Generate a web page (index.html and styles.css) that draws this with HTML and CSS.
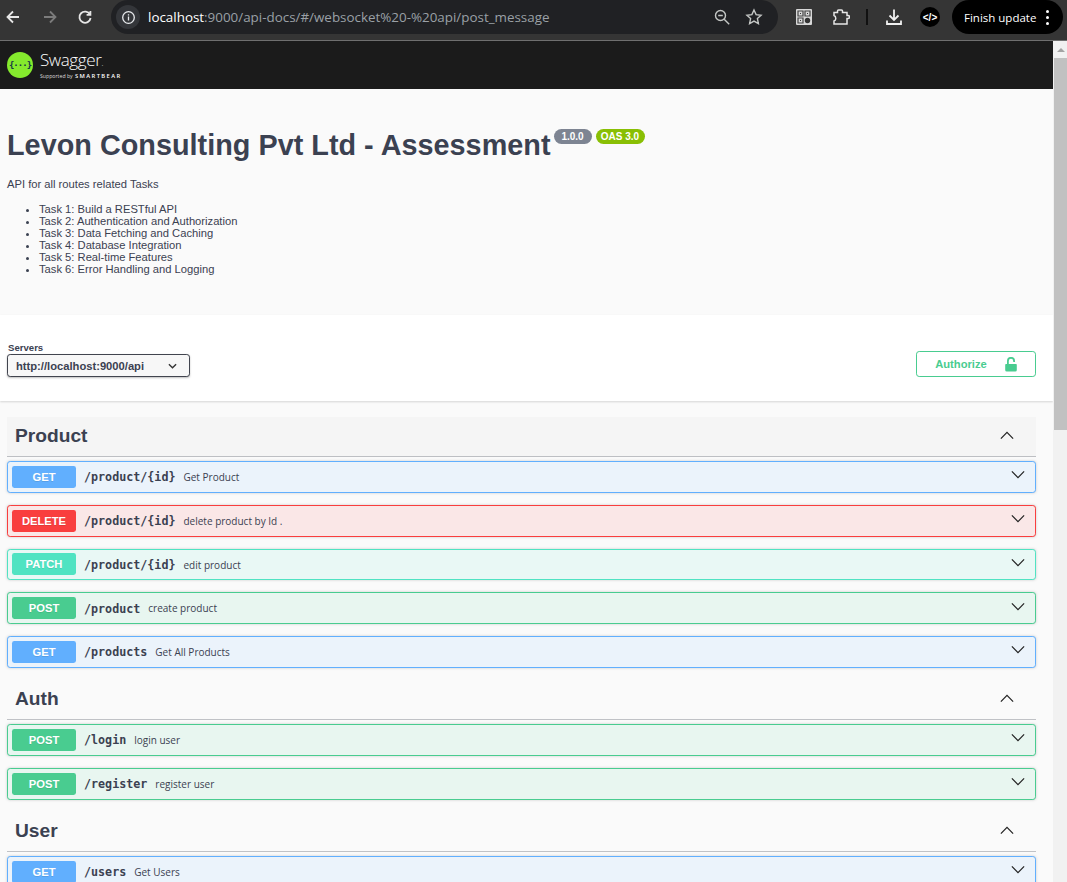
FILE: index.html
```html
<!DOCTYPE html>
<html lang="en">
<head>
<meta charset="utf-8">
<title>Swagger UI</title>
<link rel="stylesheet" href="styles.css">
</head>
<body>
<header class="browser">
  <div class="nav-btns">
    <svg class="nav-icon" viewBox="0 0 16 16"><path d="M14 8H2.500M8 2.500L2.500 8 8 13.500" /></svg>
    <svg class="nav-icon dim" viewBox="0 0 16 16"><path d="M3 8h11.500M9 2.500L14.500 8 9 13.500" /></svg>
    <svg class="nav-icon" viewBox="0 0 16 16"><path d="M13 5.500A5.600 5.600 0 1 0 13.600 9M13.400 2v3.800H9.600" /></svg>
  </div>
  <div class="omnibox">
    <span class="site-info"><svg class="info-icon" viewBox="0 0 16 16"><circle cx="8" cy="8" r="6.200"/><path d="M8 7v4.200M8 4.400v1.400"/></svg></span>
    <span class="url"><span class="host">localhost</span>:9000/api-docs/#/websocket%20-%20api/post_message</span>
    <span class="omni-actions">
      <svg class="omni-icon" viewBox="0 0 18 18"><circle cx="7.500" cy="7.500" r="5"/><path d="M5.200 7.500h4.600M11.200 11.200l5 5"/></svg>
      <svg class="omni-icon" viewBox="0 0 18 18"><path d="M9 2l2.100 4.600 5 .6-3.700 3.400 1 5L9 13.100l-4.400 2.500 1-5L1.900 7.200l5-.6z"/></svg>
    </span>
  </div>
  <div class="tools">
    <svg class="qr" viewBox="0 0 16 16"><rect width="16" height="16" rx="1" fill="#d8d8d8"/><path d="M2 2h5v5H2zM9 2h5v5H9zM2 9h5v5H2z" fill="none" stroke="#444" stroke-width="1.200"/><path d="M4 4h1v1H4zM11 4h1v1h-1zM4 11h1v1H4z" fill="#333"/><circle cx="11.500" cy="11.500" r="2.700" fill="#333"/></svg>
    <svg class="ext" viewBox="0 0 17 16"><path d="M1 3.500h3.500V2a1 1 0 0 1 1-1h3a1 1 0 0 1 1 1v1.500H14v3h1a1.500 1.500 0 0 1 0 3h-1V15H1v-3c1.200-.5 1.800-1.300 1.800-2.600S2.200 7 1 6.500z"/></svg>
    <span class="divider"></span>
    <svg class="dl" viewBox="0 0 16 16"><path d="M8 .5v10M3.500 6.500L8 11l4.500-4.500M1 11.500v3.500h14v-3.500"/></svg>
    <span class="dev-badge">&lt;/&gt;</span>
    <span class="update">Finish update<span class="kebab"><i></i><i></i><i></i></span></span>
  </div>
</header>
<div class="viewport">
  <main class="content">
    <div class="topbar">
      <div class="logo-mark">{···}</div>
      <div class="logo-text">
        <span class="logo-name">Swagger<small>.</small></span>
        <span class="logo-sub">Supported by <b>SMARTBEAR</b></span>
      </div>
    </div>
    <section class="info">
      <div class="title-row">
        <h1>Levon Consulting Pvt Ltd - Assessment</h1>
        <span class="badge version">1.0.0</span>
        <span class="badge oas">OAS 3.0</span>
      </div>
      <p class="desc">API for all routes related Tasks</p>
      <ul class="tasks">
        <li>Task 1: Build a RESTful API</li>
        <li>Task 2: Authentication and Authorization</li>
        <li>Task 3: Data Fetching and Caching</li>
        <li>Task 4: Database Integration</li>
        <li>Task 5: Real-time Features</li>
        <li>Task 6: Error Handling and Logging</li>
      </ul>
    </section>
    <section class="scheme">
      <div class="servers">
        <span class="servers-label">Servers</span>
        <div class="select">http://localhost:9000/api
          <svg class="select-arrow" viewBox="0 0 10 6"><path d="M1 1l4 4 4-4"/></svg>
        </div>
      </div>
      <button class="authorize">Authorize
        <svg class="lock" viewBox="0 0 12 15"><path class="lock-body" d="M1 7h10a.8.8 0 0 1 .8.8v5.200a1.500 1.500 0 0 1-1.500 1.500H1.700A1.500 1.500 0 0 1 .2 13V7.800A.8.8 0 0 1 1 7z"/><path class="lock-hoop" d="M2.900 7V3.900a3.100 3.100 0 0 1 6.200 0V5"/></svg>
      </button>
    </section>
    <section class="tags">
      <div class="tag product">
        <h2 class="tag-title">Product</h2>
        <svg class="tag-arrow" viewBox="0 0 16 10"><path d="M1 8.500L8 1.500l7 7"/></svg>
      </div>
      <div class="op get"><span class="method">GET</span><span class="path">/product/{id}</span><span class="sum">Get Product</span><svg class="op-arrow" viewBox="0 0 16 10"><path d="M1 1.500l7 7 7-7"/></svg></div>
      <div class="op delete"><span class="method">DELETE</span><span class="path">/product/{id}</span><span class="sum">delete product by Id .</span><svg class="op-arrow" viewBox="0 0 16 10"><path d="M1 1.500l7 7 7-7"/></svg></div>
      <div class="op patch"><span class="method">PATCH</span><span class="path">/product/{id}</span><span class="sum">edit product</span><svg class="op-arrow" viewBox="0 0 16 10"><path d="M1 1.500l7 7 7-7"/></svg></div>
      <div class="op post"><span class="method">POST</span><span class="path">/product</span><span class="sum">create product</span><svg class="op-arrow" viewBox="0 0 16 10"><path d="M1 1.500l7 7 7-7"/></svg></div>
      <div class="op get"><span class="method">GET</span><span class="path">/products</span><span class="sum">Get All Products</span><svg class="op-arrow" viewBox="0 0 16 10"><path d="M1 1.500l7 7 7-7"/></svg></div>
      <div class="tag">
        <h2 class="tag-title">Auth</h2>
        <svg class="tag-arrow" viewBox="0 0 16 10"><path d="M1 8.500L8 1.500l7 7"/></svg>
      </div>
      <div class="op post"><span class="method">POST</span><span class="path">/login</span><span class="sum">login user</span><svg class="op-arrow" viewBox="0 0 16 10"><path d="M1 1.500l7 7 7-7"/></svg></div>
      <div class="op post"><span class="method">POST</span><span class="path">/register</span><span class="sum">register user</span><svg class="op-arrow" viewBox="0 0 16 10"><path d="M1 1.500l7 7 7-7"/></svg></div>
      <div class="tag">
        <h2 class="tag-title">User</h2>
        <svg class="tag-arrow" viewBox="0 0 16 10"><path d="M1 8.500L8 1.500l7 7"/></svg>
      </div>
      <div class="op get"><span class="method">GET</span><span class="path">/users</span><span class="sum">Get Users</span><svg class="op-arrow" viewBox="0 0 16 10"><path d="M1 1.500l7 7 7-7"/></svg></div>
    </section>
  </main>
  <aside class="scrollbar">
    <div class="scroll-up"><span class="tri"></span></div>
    <div class="scroll-thumb"></div>
  </aside>
</div>
</body>
</html>
```
FILE: styles.css
```css
* { box-sizing: border-box; }
html, body { margin: 0; height: 882px; overflow: hidden; }
body { font-family: "Liberation Sans", Arial, sans-serif; background: #fafafa; color: #3b4151; }

.browser { height: 41px; background: #353535; border-bottom: 1px solid #6f6f6f; display: flex; align-items: flex-start; }
.nav-btns { display: flex; width: 111px; padding: 9px 0 0 5px; gap: 20px; }
.nav-icon { width: 16px; height: 16px; fill: none; stroke: #e6e6e6; stroke-width: 1.800; flex: none; }
.nav-icon.dim { stroke: #7c7c7c; }
.omnibox { width: 667px; height: 34px; background: #202124; border-radius: 17px; display: flex; align-items: center; }
.site-info { width: 24px; height: 24px; margin-left: 5px; border-radius: 50%; background: #34363a; display: flex; align-items: center; justify-content: center; }
.info-icon { width: 15px; height: 15px; fill: none; stroke: #e8eaed; stroke-width: 1.400; }
.url { margin-left: 8px; font-family: "Open Sans", sans-serif; font-size: 13.400px; color: #9aa0a6; white-space: nowrap; }
.host { color: #fff; }
.omni-actions { margin-left: auto; margin-right: 15px; display: flex; gap: 14px; }
.omni-icon { width: 18px; height: 18px; fill: none; stroke: #c4c7c5; stroke-width: 1.400; }
.tools { flex: 1; display: flex; align-items: center; height: 34px; padding-left: 18px; }
.qr { width: 16px; height: 16px; }
.ext { width: 17px; height: 16px; margin-left: 21px; fill: none; stroke: #e6e6e6; stroke-width: 1.500; }
.divider { width: 2px; height: 16px; background: #111; margin-left: 16px; }
.dl { width: 16px; height: 16px; margin-left: 18px; fill: none; stroke: #f0f0f0; stroke-width: 1.800; }
.dev-badge { width: 20px; height: 20px; margin-left: 18px; border-radius: 50%; background: #000; color: #fff; font-size: 10px; font-weight: 700; display: flex; align-items: center; justify-content: center; }
.update { margin-left: 12px; width: 111px; height: 34px; border-radius: 17px; background: #000; color: #fff; font-family: "Open Sans", sans-serif; font-size: 11.500px; display: flex; align-items: center; padding-left: 12px; white-space: nowrap; }
.kebab { display: flex; flex-direction: column; gap: 3px; margin-left: 10px; }
.kebab i { width: 3px; height: 3px; border-radius: 50%; background: #fff; display: block; }

.viewport { display: flex; height: 841px; overflow: hidden; }
.content { flex: 1; min-width: 0; background: #fafafa; }
.scrollbar { width: 14px; background: #f1f1f1; flex: none; padding-left: 1px; }
.scroll-up { height: 17px; display: flex; align-items: center; justify-content: center; }
.tri { width: 0; height: 0; border-left: 4px solid transparent; border-right: 4px solid transparent; border-bottom: 4px solid #a3a3a3; }
.scroll-thumb { height: 372px; background: #c1c1c1; }

.topbar { height: 48px; background: #1b1b1b; display: flex; align-items: center; padding-left: 7px; }
.logo-mark { width: 26px; height: 26px; border-radius: 50%; background: #85ea2d; color: #173647; font-family: "DejaVu Sans Mono", monospace; font-size: 9px; font-weight: 700; letter-spacing: -1px; display: flex; align-items: center; justify-content: center; }
.logo-text { display: flex; flex-direction: column; margin-left: 7px; color: #fff; }
.logo-name { font-family: "Open Sans", sans-serif; font-weight: 300; font-size: 17px; line-height: 20px; letter-spacing: -0.400px; }
.logo-name small { font-size: 8px; }
.logo-sub { font-family: "Open Sans", sans-serif; font-size: 5.200px; line-height: 7px; color: #ddd; white-space: nowrap; }
.logo-sub b { font-size: 5.800px; letter-spacing: 1.400px; font-weight: 600; color: #fff; margin-left: 1px; }

.info { height: 226px; padding: 39px 7px 0; }
.title-row { display: flex; align-items: flex-start; }
h1 { margin: 0; font-size: 28.800px; line-height: 34px; font-weight: 700; letter-spacing: 0.015px; color: #3b4151; }
.badge { margin-top: 1px; height: 15px; border-radius: 8px; color: #fff; font-size: 10px; font-weight: 700; line-height: 15px; }
.badge.version { background: #7d8492; margin-left: 3px; padding: 0 5px; min-width: 38px; text-align: center; }
.badge.oas { background: #89bf04; margin-left: 4px; padding: 0 5px; min-width: 49px; text-align: center; }
.desc { margin: 16px 0 0; font-size: 11.200px; line-height: 13px; }
.tasks { margin: 12px 0 0; padding-left: 32px; font-size: 11.200px; line-height: 12px; }

.scheme { height: 86px; background: #fff; box-shadow: 0 1px 2px rgba(0,0,0,.15); padding: 27px 17px 0 7px; display: flex; justify-content: space-between; align-items: flex-start; }
.servers { display: flex; flex-direction: column; }
.servers-label { font-size: 9.600px; font-weight: 700; line-height: 12px; padding-left: 1px; }
.select { width: 183px; height: 23px; border: 1.600px solid #41444e; border-radius: 3.200px; background: #f7f7f7; box-shadow: 0 1px 2px rgba(0,0,0,.25); font-size: 11.200px; font-weight: 700; display: flex; align-items: center; justify-content: space-between; padding: 0 12px 0 8px; }
.select-arrow { width: 9px; height: 6px; fill: none; stroke: #333; stroke-width: 1.500; }
.authorize { width: 120px; height: 26px; margin-top: 9px; background: #fff; border: 1.200px solid #49cc90; border-radius: 3.200px; color: #49cc90; font: 700 11.200px "Liberation Sans", Arial, sans-serif; display: flex; align-items: center; justify-content: center; gap: 18px; padding: 0; }
.lock { width: 12px; height: 15px; }
.lock-body { fill: #49cc90; }
.lock-hoop { fill: none; stroke: #49cc90; stroke-width: 1.800; }

.tags { padding: 16px 17px 0 7px; }
.tag { height: 40.250px; border-bottom: 1px solid rgba(59,65,81,.3); margin-bottom: 4px; display: flex; align-items: center; justify-content: space-between; padding: 0 22px 1px 8px; }
.tag.product { background: #f5f5f5; height: 40px; }
.tag-title { margin: 0; font-size: 19.200px; font-weight: 700; }
.tag-arrow, .op-arrow { width: 14px; height: 9px; fill: none; stroke: #222; stroke-width: 1.400; flex: none; }
.tag-arrow { margin-bottom: 1px; }
.op { height: 31.750px; margin-bottom: 12px; border: 1px solid; border-radius: 3.200px; box-shadow: 0 0 3px rgba(0,0,0,.19); display: flex; align-items: center; padding: 0 10px 0 4px; }
.method { width: 64px; height: 22px; border-radius: 2.400px; color: #fff; font-size: 11.200px; font-weight: 700; display: flex; align-items: center; justify-content: center; flex: none; text-shadow: 0 1px 0 rgba(0,0,0,.1); }
.path { margin: 1px 0 0 8px; font-family: "DejaVu Sans Mono", monospace; font-size: 11.700px; font-weight: 700; color: #3b4151; white-space: nowrap; }
.sum { margin: 0.500px 0 0 8px; font-family: "Open Sans", sans-serif; font-size: 10px; color: #3b4151; white-space: nowrap; }
.op-arrow { margin-left: auto; margin-bottom: 4px; }
.op.get { background: #ebf3fb; border-color: #61affe; }
.op.get .method { background: #61affe; }
.op.delete { background: #fae7e7; border-color: #f93e3e; }
.op.delete .method { background: #f93e3e; }
.op.patch { background: #e9f8f5; border-color: #50e3c2; }
.op.patch .method { background: #50e3c2; }
.op.post { background: #e8f6f0; border-color: #49cc90; }
.op.post .method { background: #49cc90; }
```
